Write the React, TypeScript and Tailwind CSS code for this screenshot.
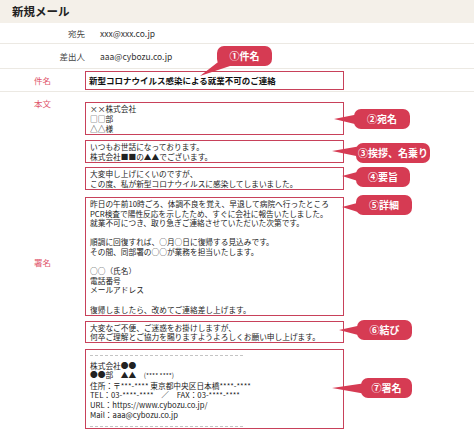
import React from "react";

type CalloutProps = {
  label: string;
  top: number;
  gap: number;
  width: number;
  tail: [number, number];
};

const FONT = { fontFamily: '"Noto Sans CJK JP", "Noto Sans", sans-serif' };

function Callout({ label, top, gap, width, tail }: CalloutProps) {
  const [tx, ty] = tail;
  return (
    <div
      className="absolute h-[20px]"
      style={{ left: `calc(100% + ${gap}px)`, top, width }}
    >
      <svg className="absolute left-0 top-0 h-px w-px overflow-visible" aria-hidden>
        <polygon points={`${tx},${ty} 5,${ty - 5} 5,${ty + 6}`} fill="#d63b53" />
      </svg>
      <div className="relative flex h-full items-center justify-center rounded-[7px] bg-[#d63b53] text-[10px] font-bold text-white">
        {label}
      </div>
    </div>
  );
}

function Box({
  children,
  className = "",
  callout,
}: {
  children: React.ReactNode;
  className?: string;
  callout?: CalloutProps;
}) {
  return (
    <div
      className={`relative w-[259px] border-[1.5px] border-[#c8415a] px-[4px] text-[7.7px] leading-[9.6px] text-[#222] ${className}`}
    >
      {children}
      {callout && <Callout {...callout} />}
    </div>
  );
}

function Dashes() {
  return (
    <div className="flex h-[9.6px] items-center">
      <div className="w-[153px] border-t border-dashed border-[#c4c4c4]" />
    </div>
  );
}

export default function App() {
  return (
    <div className="h-[435px] w-[474px] overflow-hidden bg-white" style={FONT}>
      {/* header */}
      <div className="flex h-[23px] items-center bg-[#f4f0e9] px-3">
        <span className="text-[11.5px] font-bold text-[#222]">新規メール</span>
      </div>

      {/* 宛先 */}
      <div className="flex h-[21px] items-center border-b border-[#ece9e3]">
        <span className="w-[85px] text-right text-[8.5px] text-[#444]">宛先</span>
        <span className="ml-[15px] text-[8.5px] text-[#333]">xxx@xxx.co.jp</span>
      </div>

      {/* 差出人 */}
      <div className="flex h-[25px] items-center border-b border-[#ece9e3]">
        <span className="w-[85px] text-right text-[8.5px] text-[#444]">差出人</span>
        <span className="ml-[15px] text-[8.5px] text-[#333]">aaa@cybozu.co.jp</span>
      </div>

      {/* 件名 */}
      <div className="flex h-[23px] items-center border-b border-[#ece9e3]">
        <span className="w-[85px] text-center text-[8.5px] text-[#e0566b]">件名</span>
        <div className="relative flex h-[19px] w-[259px] items-center border-[1.5px] border-[#c8415a] px-[3px] text-[8.5px] font-bold text-[#111]">
          新型コロナウイルス感染による就業不可のご連絡
          <div className="absolute left-[131px] top-[-26px] h-[20px] w-[55px]">
            <svg className="absolute left-0 top-0 h-px w-px overflow-visible" aria-hidden>
              <polygon points="-17,30 5,13 13,20" fill="#d63b53" />
            </svg>
            <div className="relative flex h-full items-center justify-center rounded-[7px] bg-[#d63b53] text-[10px] font-bold text-white">
              ①件名
            </div>
          </div>
        </div>
      </div>

      {/* body */}
      <div className="flex">
        <div className="flex w-[85px] flex-col items-center">
          <span className="mt-[5px] text-[8.5px] leading-[12px] text-[#e0566b]">本文</span>
          <span className="mt-[147px] text-[8.5px] leading-[12px] text-[#e0566b]">署名</span>
        </div>
        <div className="flex flex-col pt-[10px]">
          <Box
            className="h-[33px] pt-[0.5px] leading-[10.3px]"
            callout={{ label: "②宛名", top: 6, gap: 11, width: 56, tail: [-20, 10] }}
          >
            <div>××株式会社</div>
            <div>□□部</div>
            <div>△△様</div>
          </Box>
          <Box
            className="mt-[5px] h-[23px] pt-[1px]"
            callout={{ label: "③挨拶、名乗り", top: 2, gap: 13, width: 74, tail: [-24, 8] }}
          >
            <div>いつもお世話になっております。</div>
            <div>株式会社■■の▲▲でございます。</div>
          </Box>
          <Box
            className="mt-[4px] h-[23px] pt-[1px]"
            callout={{ label: "④要旨", top: -1, gap: 13, width: 54, tail: [-14, 9] }}
          >
            <div>大変申し上げにくいのですが、</div>
            <div>この度、私が新型コロナウイルスに感染してしまいました。</div>
          </Box>
          <Box
            className="mt-[7px] h-[119px] pt-[1px]"
            callout={{ label: "⑤詳細", top: -3, gap: 13, width: 56, tail: [-14, 12] }}
          >
            <div>昨日の午前10時ごろ、体調不良を覚え、早退して病院へ行ったところ</div>
            <div>PCR検査で陽性反応を示したため、すぐに会社に報告いたしました。</div>
            <div>就業不可につき、取り急ぎご連絡させていただいた次第です。</div>
            <div>&nbsp;</div>
            <div>順調に回復すれば、○月○日に復帰する見込みです。</div>
            <div>その間、同部署の○○が業務を担当いたします。</div>
            <div>&nbsp;</div>
            <div>○○（氏名）</div>
            <div>電話番号</div>
            <div>メールアドレス</div>
            <div>&nbsp;</div>
            <div>復帰しましたら、改めてご連絡差し上げます。</div>
          </Box>
          <Box
            className="mt-[5px] h-[22px] pt-[0.5px]"
            callout={{ label: "⑥結び", top: -2, gap: 14, width: 55, tail: [-18, 10] }}
          >
            <div>大変なご不便、ご迷惑をお掛けしますが、</div>
            <div>何卒ご理解とご協力を賜りますようよろしくお願い申し上げます。</div>
          </Box>
          <Box
            className="mt-[6px] h-[80px] pt-[1px]"
            callout={{ label: "⑦署名", top: 28, gap: 18, width: 51, tail: [-29, 10] }}
          >
            <Dashes />
            <div>株式会社●●</div>
            <div>
              ●●部　▲▲　<span className="text-[6.5px]">(**** ****)</span>
            </div>
            <div>住所：〒***-**** 東京都中央区日本橋****-****</div>
            <div>TEL：03-****-****　／　FAX：03-****-****</div>
            <div>URL：https://www.cybozu.co.jp/</div>
            <div>Mail：aaa@cybozu.co.jp</div>
            <div className="mt-[3px]">
              <Dashes />
            </div>
          </Box>
        </div>
      </div>
    </div>
  );
}
